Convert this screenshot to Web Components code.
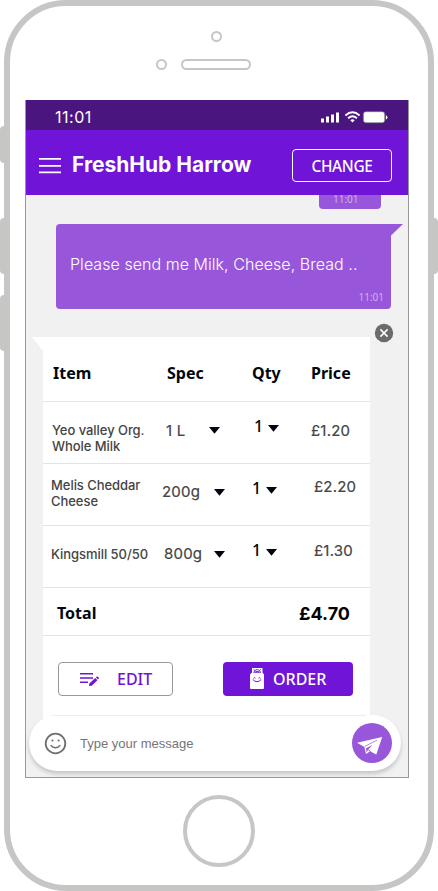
<!DOCTYPE html>
<html lang="en"><head><meta charset="utf-8"><title>FreshHub Harrow</title>
<style>body{margin:0;background:#fff;width:438px;height:891px;overflow:hidden;font-family:"Noto Sans","Open Sans",sans-serif}</style></head>
<body>
<phone-frame>
  <status-bar>11:01</status-bar>
  <app-header><span>FreshHub Harrow</span><span slot="action">CHANGE</span></app-header>
  <chat-thread>
    <earlier-bubble>11:01</earlier-bubble>
    <user-bubble>Please send me Milk, Cheese, Bread ..<span slot="time">11:01</span></user-bubble>
    <order-card></order-card>
    <message-composer slot="composer">Type your message</message-composer>
  </chat-thread>
</phone-frame>
<script>
const define=(name,markup,onConnect)=>customElements.define(name,class extends HTMLElement{
  constructor(){super();this.attachShadow({mode:'open'}).innerHTML='<style>*{box-sizing:border-box}:host{display:block;box-sizing:border-box}svg{display:block;flex:none}</style>'+markup;}
  connectedCallback(){if(onConnect)onConnect(this,this.shadowRoot);}
});

define('phone-frame',`<style>
:host{position:relative;width:438px;height:891px;padding:0 4px}
.body{height:891px;border:6px solid #c6c6c5;border-radius:62px;display:flex;flex-direction:column;align-items:center;padding:25px 0 0}
.cam{width:11px;height:11px;border:2px solid #c6c6c5;border-radius:50%}
.ear{display:flex;gap:14px;align-items:center;margin:17px 12px 0 0;width:95px;align-self:flex-start;margin-left:146px}
.slot{width:70px;height:11px;border:2px solid #c6c6c5;border-radius:6px;flex:none}
.ear .cam{flex:none}
.screen{width:384px;height:678px;margin-top:30px;align-self:flex-start;margin-left:15px;border:solid #999;border-width:0 1px 1px}
.home{width:72px;height:72px;border:4px solid #c6c6c5;border-radius:50%;margin:17px 0 0 0}
.key{position:absolute;width:6px;height:56px;background:#c6c6c5}
.l{left:0;border-radius:4px 0 0 4px}.r{right:0;border-radius:0 4px 4px 0}
</style>
<i class="key l" style="top:126px;height:37px"></i><i class="key l" style="top:218px"></i><i class="key l" style="top:295px"></i><i class="key r" style="top:218px"></i>
<div class="body"><div class="cam" style="margin-right:5px"></div><div class="ear"><div class="cam"></div><div class="slot"></div></div>
<div class="screen"><slot></slot></div><div class="home"></div></div>`);

define('status-bar',`<style>
:host{height:30px;background:#4b157f;color:#fff;display:flex;align-items:center;justify-content:space-between;padding:4px 20px 0 28px;font:400 16px/20px Inter,sans-serif}
span{letter-spacing:.5px;padding-left:1px}
svg{margin-top:-1px}
</style><span><slot></slot></span>
<svg width="68" height="14" viewBox="0 0 68 14" fill="#fff"><path d="M1 8.5h3v4H1zM6 6.5h3v6H6zM11 4.5h3v8h-3zM16 2.5h3v10h-3z"/>
<g fill="none" stroke="#fff" stroke-width="1.9"><path d="M25.4 5.5Q32.5-.8 39.6 5.5M28.1 8.2Q32.5 4.4 36.9 8.2"/></g><path d="M30.3 10.2q2.2-1.8 4.4 0L32.5 12.5z"/>
<rect x="43.4" y="1.7" width="21.3" height="11" rx="2.4" stroke="#777" stroke-width=".6"/><path d="M65.8 5q3.4 2.3 0 4.8z"/></svg>`);

define('app-header',`<style>
:host{height:65px;background:#7014d8;color:#fff;display:flex;padding:19px 16px 0 13px}
h1{font:700 21px/30px Inter,sans-serif;margin:0 0 0 11px;padding-top:1px;flex:1;white-space:nowrap}
button{width:100px;height:33px;border:1px solid #fff;border-radius:4px;background:none;color:#fff;font:500 15.4px/30px "Noto Sans",sans-serif;letter-spacing:-.35px;padding:2px 0 0;}
svg{margin-top:9px}
</style><svg width="22" height="16" fill="#fff"><path d="M0 0h22v1.7H0zM0 7h22v1.7H0zM0 13.6h22v1.7H0z"/></svg><h1><slot></slot></h1><button><slot name="action"></slot></button>`);

define('chat-thread',`<style>
:host{position:relative;height:582px;background:#f1f1f1}
.c{position:absolute;left:3px;top:520px}
</style><slot></slot><div class="c"><slot name="composer"></slot></div>`);

define('earlier-bubble',`<style>
:host{width:62px;height:14px;margin-left:293px;padding:0 0 0 14px;background:#9857da;border-radius:0 0 4px 4px;color:#cdb0ee;font:400 10px/8px "Noto Sans",sans-serif}
</style><slot></slot>`);

define('user-bubble',`<style>
:host{position:relative;width:335px;height:85px;margin:15px 0 0 30px;background:#9857da;border-radius:4px;color:#fff;padding:30px 7px 4px 14px;display:flex;flex-direction:column;justify-content:space-between;font:300 16px/20px Inter,sans-serif;letter-spacing:.05px;white-space:nowrap}
.t{align-self:flex-end;font:400 10px/16px "Noto Sans",sans-serif;letter-spacing:0;color:#cdb0ee}
svg{position:absolute;left:331px;top:0}
</style><div><slot></slot></div><div class="t"><slot name="time"></slot></div><svg width="17" height="12"><path d="M0 0h16L4 11.5H0z" fill="#9857da"/></svg>`);

define('line-item',`<style>
:host{height:62px;border-bottom:1px solid #e3e3e3;display:grid;grid-template-columns:119px 82px 67px 59px;align-items:start;color:#444}
.n{font:500 13px/16px Inter,sans-serif;letter-spacing:-.05px;white-space:pre}
.s,.q{display:flex}.s,.p{font:400 15px/20px Inter,sans-serif;letter-spacing:.2px;-webkit-text-stroke:.2px #444}
.q{font:500 16px/20px "Noto Sans",sans-serif;color:#000610;gap:5px}
</style><div class="n"></div><div class="s"></div><div class="q"></div><div class="p"></div>`,
(host,root)=>{
  const d=JSON.parse(host.getAttribute('data'));
  const caret=top=>`<svg width="11" height="7" style="margin-top:${top}px"><path d="M0 0h11L5.5 6.7z" fill="#000610"/></svg>`;
  const put=(s,html,[x,y])=>{const e=root.querySelector(s);e.innerHTML=html;e.style.padding=y+'px 0 0 '+x+'px'};
  put('.n',d.name,d.at[0]);
  put('.s',`<span style="width:${d.sw}px">${d.spec}</span>`+caret(d.sc),d.at[1]);
  put('.q','<span>1</span>'+caret(9),d.at[2]);
  put('.p',d.price,d.at[3]);
});

define('icon-button',`<style>
:host{height:34px;border-radius:4px;display:flex;align-items:center;font:500 16px/20px "Noto Sans",sans-serif}
:host([kind=edit]){width:115px;border:1px solid #999;color:#7014d8;padding-left:20px;gap:17px}
:host([kind=order]){width:130px;background:#7014d8;color:#fff;padding-left:27px;gap:9px}
:host([kind=order]) ::slotted(svg){margin-top:-2px}
</style><slot name="icon"></slot><span><slot></slot></span>`);

define('order-card',`<style>
:host{position:relative;width:327px;height:390px;margin:28px 0 0 17px;background:#fff;color:#000610}
.h{height:65px;border-bottom:1px solid #e3e3e3;display:grid;grid-template-columns:114px 85px 59px 1fr;padding:26px 0 0 10px;font:700 16px/20px "Noto Sans",sans-serif}
.t{height:48px;border-bottom:1px solid #e3e3e3;display:flex;justify-content:space-between;padding:15px 20px 0 14px;font:700 16px/20px "Noto Sans",sans-serif}
.t b{font:700 18px/22px Inter,sans-serif;color:#000}
.a{display:flex;justify-content:space-between;padding:26px 17px 0 15px}
.x{position:absolute;left:331px;top:-14px}.tail{position:absolute;left:-11px;top:0}
</style>
<svg class="tail" width="12" height="14"><path d="M0 0h12v14H11z" fill="#fff"/></svg>
<svg class="x" width="20" height="20"><circle cx="10" cy="10" r="9.2" fill="#6b6b6b"/><path d="M6.4 6.4l7.2 7.2M13.6 6.4l-7.2 7.2" stroke="#fff" stroke-width="1.5"/></svg>
<div class="h"><span>Item</span><span>Spec</span><span>Qty</span><span>Price</span></div>
<line-item data='{"name":"Yeo valley Org.\\nWhole Milk","spec":"1 L","price":"£1.20","sw":43,"sc":6,"at":[[9,20],[4,19],[10,14],[0,19]]}'></line-item>
<line-item data='{"name":"Melis Cheddar\\nCheese","spec":"200g","price":"£2.20","sw":52,"sc":7,"at":[[8,13],[0,18],[8,14],[3,13]]}'></line-item>
<line-item data='{"name":"Kingsmill 50/50","spec":"800g","price":"£1.30","sw":50,"sc":7,"at":[[8,20],[2,18],[8,14],[3,15]]}'></line-item>
<div class="t"><span>Total</span><b>£4.70</b></div>
<div class="a"><icon-button kind="edit"><svg slot="icon" width="21" height="15" viewBox="0 0 21 15" fill="#7014d8"><path d="M1 1h13v1.5H1zM1 5.2h13v1.5H1zM1 9.6h8v1.5H1zM10.4 11.4l5.8-5.3 2.2 2.2-5.7 5.4-2.8.4zM16.9 5.4l1-.8q.5-.3.9.1l1 1q.4.5 0 .9l-.9.9z"/></svg>EDIT</icon-button>
<icon-button kind="order"><svg slot="icon" width="14" height="21" viewBox="0 0 14 21"><path d="M2 0h10.5v4.5l1.5 2V20q0 1-1 1H1q-1 0-1-1V6.5l2-2z" fill="#fff"/><path d="M3.7 4.8Q4 1.6 7.2 1.6t3.4 3.2M3.5 1.3l1.2 1M10.8 1.3l-1.2 1" fill="none" stroke="#7014d8" stroke-width=".9"/><path d="M4 4.8Q4.5 3 7.2 3t3.1 1.8z" fill="#7014d8"/><path d="M3.5 10.2q1-1 2 0M8.5 10.2q1-1 2 0M2.8 11.5q4.2 4.5 8.4 0" fill="none" stroke="#7014d8"/></svg>ORDER</icon-button></div>`);

define('message-composer',`<style>
:host{width:372px;height:56px;border-radius:28px;background:linear-gradient(#ededed,#ededed) 20px 0/317px 1px no-repeat #fff;box-shadow:0 3px 4px rgba(0,0,0,.18);display:flex;align-items:center;padding:0 9px 0 15px;font:400 13px/16px "Liberation Sans",Arial,sans-serif;color:#757575}
div{flex:1;margin-left:13px;padding-top:1px}
</style><svg width="23" height="24" viewBox="0 0 23 24"><g fill="none" stroke="#707070"><circle cx="11.5" cy="12.5" r="9.8" stroke-width="1.8"/><path d="M6.6 14.2q4.9 5 9.8 0" stroke-width="1.6"/></g><circle cx="8.4" cy="9.5" r="1.1" fill="#707070"/><circle cx="14.6" cy="9.5" r="1.1" fill="#707070"/></svg>
<div><slot></slot></div>
<svg width="40" height="40"><circle cx="20" cy="20" r="20" fill="#9857da"/><path d="M5 19.7L30.2 14 24.3 31.4 18 28.3 14 31 12.4 24z" fill="#fff"/><path d="M12.6 23.5L25 17.2" stroke="#9857da" stroke-width=".7"/><path d="M14 25.2L20.5 22 16.2 26.4 14.7 29.6z" fill="#9857da"/><path d="M16.2 26.8l2.6 1.7" stroke="#9857da" stroke-width=".9"/></svg>`);
</script>
</body></html>
